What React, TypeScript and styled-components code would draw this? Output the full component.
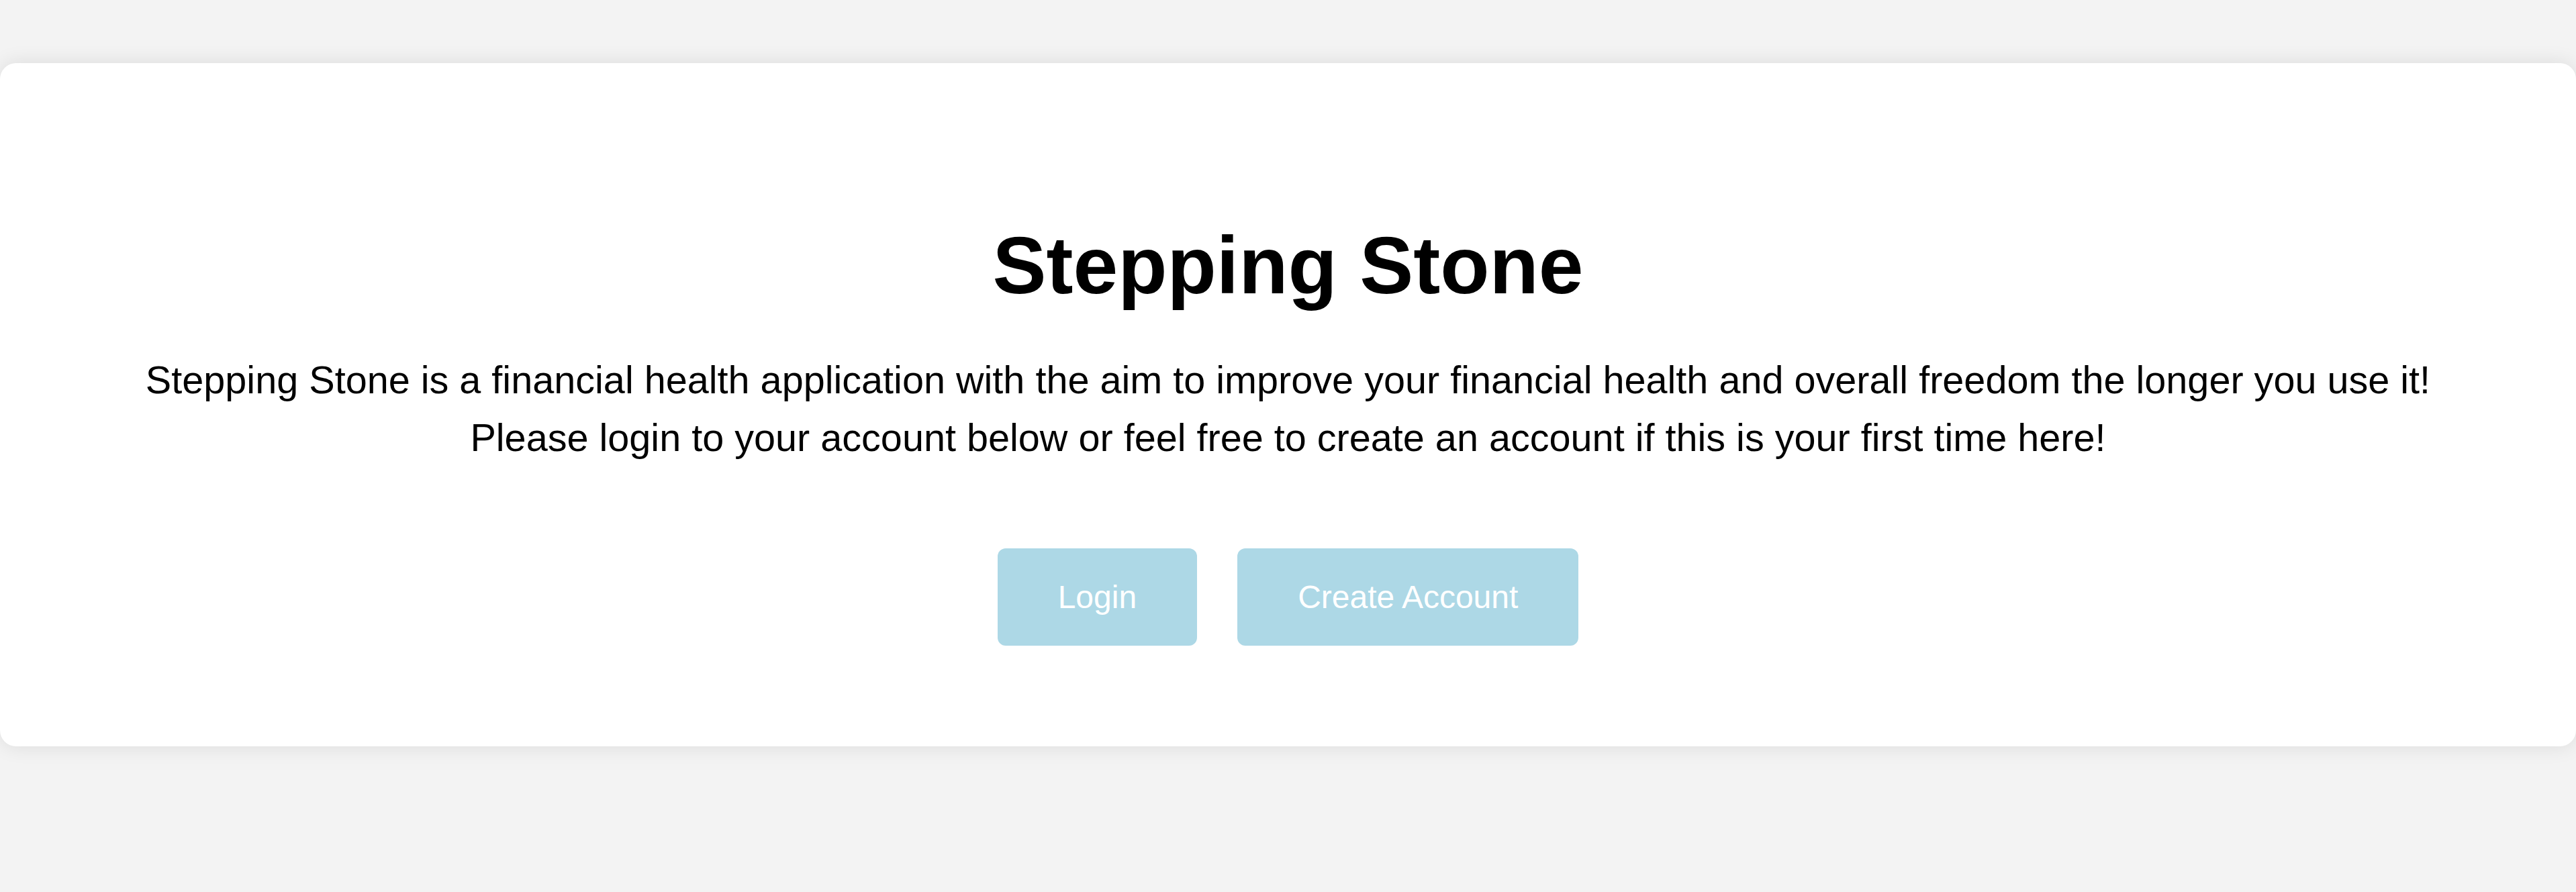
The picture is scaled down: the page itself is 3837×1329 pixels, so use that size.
import styled, { createGlobalStyle } from 'styled-components';

const GlobalStyle = createGlobalStyle`
  html, body {
    margin: 0;
    padding: 0;
    background: #f3f3f3;
    font-family: 'Liberation Sans', Arial, sans-serif;
  }
`;

export default function App() {
  return (
    <>
      <GlobalStyle />
      <Page>
        <Card>
          <Title>Stepping Stone</Title>
          <Intro>
            Stepping Stone is a financial health application with the aim to improve your
            financial health and overall freedom the longer you use it!
            <br />
            Please login to your account below or feel free to create an account if this is
            your first time here!
          </Intro>
          <Actions>
            <Button>Login</Button>
            <Button>Create Account</Button>
          </Actions>
        </Card>
      </Page>
    </>
  );
}

const Page = styled.div({
  paddingTop: '94px',
  minHeight: '1329px',
  boxSizing: 'border-box',
});

const Card = styled.div({
  background: '#fff',
  borderRadius: '24px',
  boxShadow: '0 0 30px rgba(0, 0, 0, 0.1)',
  padding: '229px 0 150px',
  display: 'flex',
  flexDirection: 'column',
  alignItems: 'center',
  textAlign: 'center',
});

const Title = styled.h1({
  margin: 0,
  fontSize: '120px',
  lineHeight: 1.2,
  fontWeight: 700,
  color: '#000',
});

const Intro = styled.p({
  margin: '56px 0 0',
  fontSize: '57.6px',
  lineHeight: 1.5,
  color: '#000',
});

const Actions = styled.div({
  display: 'flex',
  gap: '60px',
  marginTop: '121px',
});

const Button = styled.button({
  background: '#add8e6',
  color: '#fff',
  border: 'none',
  borderRadius: '12px',
  padding: '46px 90px',
  fontFamily: "'Liberation Sans', Arial, sans-serif",
  fontSize: '48px',
  lineHeight: '53px',
  cursor: 'pointer',
});
